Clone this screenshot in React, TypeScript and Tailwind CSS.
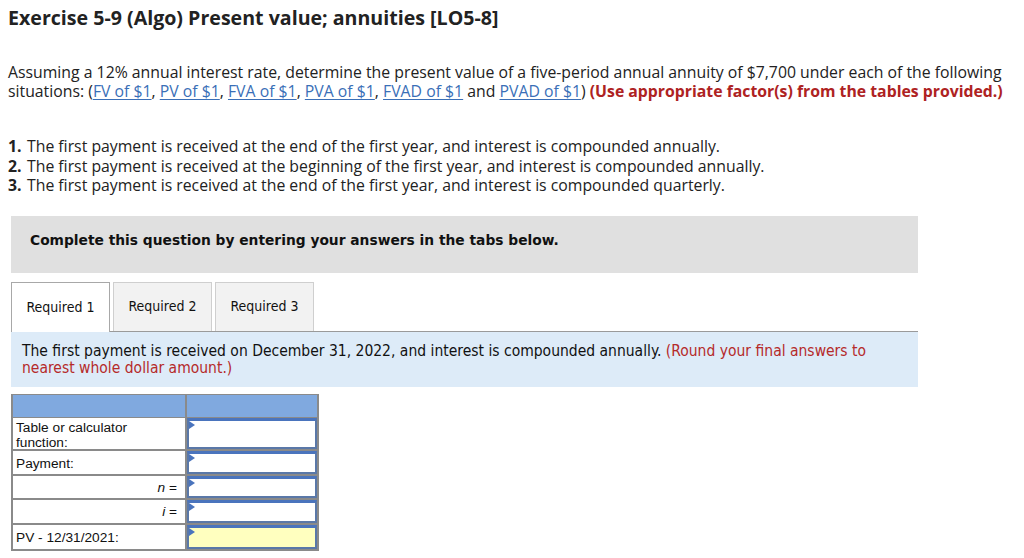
import React from 'react';

const links = ['FV of $1', 'PV of $1', 'FVA of $1', 'PVA of $1', 'FVAD of $1'];

const items = [
    'The first payment is received at the end of the first year, and interest is compounded annually.',
    'The first payment is received at the beginning of the first year, and interest is compounded annually.',
    'The first payment is received at the end of the first year, and interest is compounded quarterly.',
];

const rows = [
    { label: 'Table or calculator function:', align: 'left', h: 'h-[33px]', pad: 'pt-[2px]' },
    { label: 'Payment:', align: 'left', h: 'h-[25px]', pad: 'pt-[5px]' },
    { label: 'n', align: 'right', h: 'h-[24px]', pad: 'pt-[4px]' },
    { label: 'i', align: 'right', h: 'h-[25px]', pad: 'pt-[4px]' },
    { label: 'PV - 12/31/2021:', align: 'left', h: 'h-[24px]', pad: 'pt-[5px]', yellow: true },
];

function Link({ children }: { children: React.ReactNode }) {
    return (
        <span className="inline-block leading-[19px] text-[#3a6fb7] underline underline-offset-2">{children}</span>
    );
}

export default function App() {
    return (
        <div className="w-[1024px] h-[558px] overflow-hidden bg-white text-[#222] font-['Open_Sans',sans-serif]">
            {/* Heading */}
            <h1 className="pl-[8px] pt-[6px] text-[19.6px] font-bold leading-[24px] text-[#222]">
                Exercise 5-9 (Algo) Present value; annuities [LO5-8]
            </h1>

            {/* Prompt */}
            <div className="pl-[8px] pt-[33px] text-[15.8px] leading-[19px] pr-[10px]">
                <div>
                    Assuming a 12% annual interest rate, determine the present value of a five-period annual annuity
                    of $7,700 under each of the following
                </div>
                <div className="flex items-center whitespace-pre h-[19px]">
                    <span>situations: (</span>
                    {links.map((l, i) => (
                        <React.Fragment key={l}>
                            <Link>{l}</Link>
                            <span>{i < links.length - 1 ? ', ' : ' and '}</span>
                        </React.Fragment>
                    ))}
                    <Link>PVAD of $1</Link>
                    <span>) </span>
                    <span className="font-bold text-[#ae2222]">
                        (Use appropriate factor(s) from the tables provided.)
                    </span>
                </div>
            </div>

            {/* Requirements list */}
            <ol className="pl-[8px] pt-[36px] text-[15.8px] leading-[19.5px]">
                {items.map((t, i) => (
                    <li key={i} className="flex">
                        <span className="w-[19px] font-bold text-right pr-[6px] shrink-0">{i + 1}.</span>
                        <span>{t}</span>
                    </li>
                ))}
            </ol>

            {/* Instruction box */}
            <div className="ml-[11px] mt-[20px] w-[907px] h-[57px] bg-[#e0e0e0] pl-[19px] pt-[14px] font-['DejaVu_Sans',sans-serif] text-[13.8px] font-bold text-[#111]">
                Complete this question by entering your answers in the tabs below.
            </div>

            {/* Tabs */}
            <div className="ml-[11px] mt-[9px] w-[907px] flex gap-[3px] border-b border-[#9a9a9a] font-['DejaVu_Sans_Condensed','DejaVu_Sans',sans-serif] text-[14px] text-[#111]">
                <div className="w-[99px] h-[50px] -mb-px flex items-center justify-center bg-white border border-b-0 border-[#a8a8a8]">
                    Required 1
                </div>
                <div className="w-[99px] h-[49px] flex items-center justify-center bg-[#f2f2f2] border border-b-0 border-[#cfcfcf]">
                    Required 2
                </div>
                <div className="w-[99px] h-[49px] flex items-center justify-center bg-[#f2f2f2] border border-b-0 border-[#cfcfcf]">
                    Required 3
                </div>
            </div>

            {/* Tab content */}
            <div className="ml-[11px] w-[907px] h-[55px] bg-[#ddebf8] pl-[11px] pt-[11px] pr-[40px] font-['DejaVu_Sans_Condensed','DejaVu_Sans',sans-serif] text-[15.5px] leading-[17px] text-[#111]">
                The first payment is received on December 31, 2022, and interest is compounded annually.{' '}
                <span className="text-[#b52a2a]">(Round your final answers to nearest whole dollar amount.)</span>
            </div>

            {/* Answer table */}
            <div className="ml-[11px] mt-[7px] w-[308px] border-2 border-[#8a8a8a] border-t-[1px] font-['Liberation_Sans',Arial,sans-serif] text-[13.7px] leading-[15px] text-[#111]">
                <div className="flex h-[23px] bg-[#80a9df] border-b border-[#8a8a8a]">
                    <div className="w-[174px] border-r-2 border-[#8a8a8a]" />
                    <div className="flex-1" />
                </div>
                {rows.map((r, i) => (
                    <div
                        key={i}
                        className={`flex ${r.h} ${i < rows.length - 1 ? 'border-b-2 border-[#8a8a8a]' : ''}`}
                    >
                        <div
                            className={`w-[174px] border-r-2 border-[#8a8a8a] px-[3px] ${r.pad} ${
                                r.align === 'right' ? 'text-right pr-[8px]' : ''
                            }`}
                        >
                            {r.align === 'right' ? (
                                <span>
                                    <i>{r.label}</i> =
                                </span>
                            ) : (
                                <span className="block w-[135px]">{r.label}</span>
                            )}
                        </div>
                        <div
                            className={`relative flex-1 border-2 border-[#5a78a8] border-t-[3px] border-t-[#4a74bd] ${
                                r.yellow ? 'bg-[#ffffbf]' : 'bg-white'
                            }`}
                        >
                            <svg
                                className="absolute left-0 top-0"
                                width="6"
                                height="8"
                                viewBox="0 0 6 8"
                                aria-hidden="true"
                            >
                                <path d="M0 0 L6 4 L0 8 Z" fill="#4a74bd" />
                            </svg>
                        </div>
                    </div>
                ))}
            </div>
        </div>
    );
}
